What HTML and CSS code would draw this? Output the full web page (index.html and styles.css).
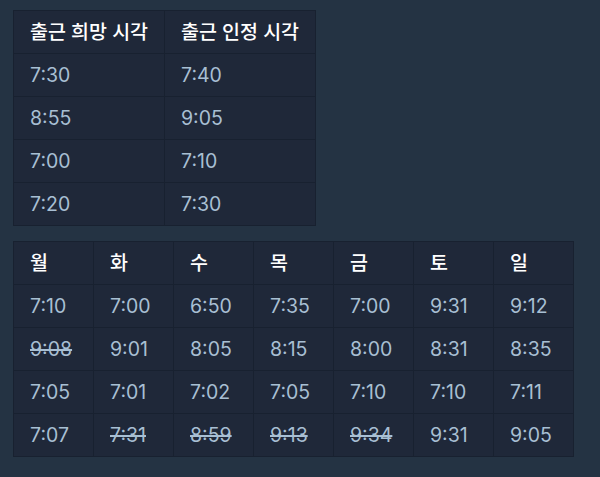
FILE: index.html
```html
<!DOCTYPE html>
<html lang="ko">
<head>
<meta charset="utf-8">
<link rel="stylesheet" href="styles.css">
</head>
<body>
<div class="page">
  <table class="grid narrow">
    <thead>
      <tr><th>출근 희망 시각</th><th>출근 인정 시각</th></tr>
    </thead>
    <tbody>
      <tr><td>7:30</td><td>7:40</td></tr>
      <tr><td>8:55</td><td>9:05</td></tr>
      <tr><td>7:00</td><td>7:10</td></tr>
      <tr><td>7:20</td><td>7:30</td></tr>
    </tbody>
  </table>
  <table class="grid week">
    <thead>
      <tr><th>월</th><th>화</th><th>수</th><th>목</th><th>금</th><th>토</th><th>일</th></tr>
    </thead>
    <tbody>
      <tr><td>7:10</td><td>7:00</td><td>6:50</td><td>7:35</td><td>7:00</td><td>9:31</td><td>9:12</td></tr>
      <tr><td><s>9:08</s></td><td>9:01</td><td>8:05</td><td>8:15</td><td>8:00</td><td>8:31</td><td>8:35</td></tr>
      <tr><td>7:05</td><td>7:01</td><td>7:02</td><td>7:05</td><td>7:10</td><td>7:10</td><td>7:11</td></tr>
      <tr><td>7:07</td><td><s>7:31</s></td><td><s>8:59</s></td><td><s>9:13</s></td><td><s>9:34</s></td><td>9:31</td><td>9:05</td></tr>
    </tbody>
  </table>
</div>
</body>
</html>
```
FILE: styles.css
```css
html, body {
  margin: 0;
  padding: 0;
  background: #243343;
}
.page {
  padding: 10px 13px;
  display: flex;
  flex-direction: column;
  align-items: flex-start;
  gap: 15px;
  font-family: Inter, "Noto Sans CJK KR", sans-serif;
}
.grid {
  border-collapse: collapse;
  background: #1f2839;
  table-layout: fixed;
}
.grid th, .grid td {
  border: 1px solid #182130;
  height: 43px;
  padding: 0 0 0 16px;
  text-align: left;
  box-sizing: border-box;
  font-size: 19.5px;
  line-height: 24px;
}
.grid th {
  color: #ffffff;
  font-weight: 500;
}
.grid td {
  color: #a8bfd3;
  font-weight: 400;
}
.grid s {
  text-decoration-thickness: 2px;
}
.narrow th, .narrow td { width: 151px; }
.week th, .week td { width: 80px; }
```
